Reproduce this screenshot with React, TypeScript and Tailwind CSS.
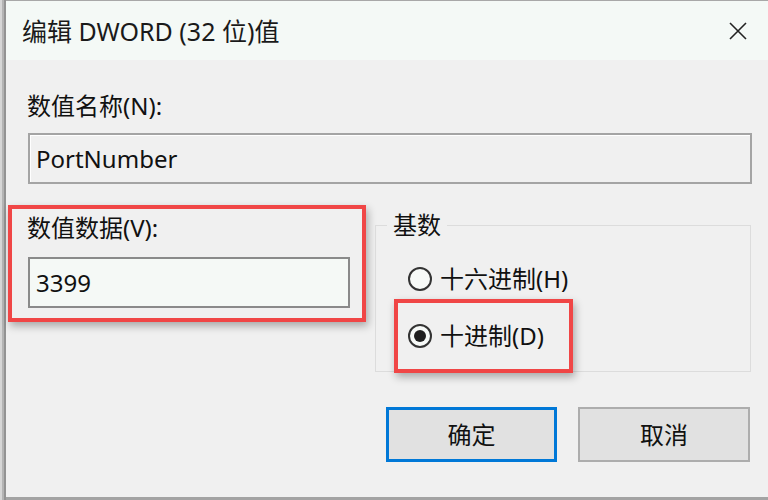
import React from 'react';

const font = { fontFamily: '"Noto Sans", "Noto Sans CJK SC", sans-serif' };

const Radio = ({ checked }: { checked?: boolean }) => (
  <span className="flex h-[24px] w-[24px] shrink-0 items-center justify-center rounded-full border-[2px] border-[#333333] bg-[#f7faf8]">
    {checked && <span className="h-[12px] w-[12px] rounded-full bg-[#1f1f1f]" />}
  </span>
);

const App = () => {
  return (
    <div className="flex h-[500px] w-[768px] overflow-hidden bg-[#f0f0f0] text-[#111111]" style={font}>
      {/* window frame, left side */}
      <div className="flex h-full">
        <div className="w-[2px] bg-[#d6d6d6]" />
        <div className="w-[2px] bg-[#b4b4b4]" />
        <div className="w-[2px] bg-[#939393]" />
      </div>

      <div className="flex flex-1 flex-col border-t border-b-[3px] border-t-[#a8a8a8] border-b-[#a3a3a3]">
        {/* Title bar */}
        <div className="flex h-[59px] shrink-0 items-center justify-between bg-[#f4f9f6] pl-[16px] pr-[21px]">
          <span className="text-[25px] leading-[30px] text-[#1a1a1a]">编辑 DWORD (32 位)值</span>
          <svg width="18" height="18" viewBox="0 0 18 18" className="text-[#222222]">
            <path d="M1 1 L17 17 M17 1 L1 17" stroke="currentColor" strokeWidth="1.6" />
          </svg>
        </div>

        {/* Body */}
        <div className="flex flex-1 flex-col">
          <div className="ml-[21px] mt-[32px] text-[24px] leading-[28px]">数值名称(N):</div>
          <div className="ml-[22px] mr-[16px] mt-[13px] flex h-[51px] items-center border-[2px] border-[#a4a4a4] bg-[#f0f0f0] pl-[6px] text-[24px] shadow-[inset_1px_1px_0_#ffffff]">
            PortNumber
          </div>

          <div className="mt-[21px] flex items-start">
            {/* Value data (highlighted) */}
            <div className="ml-[2px] h-[117px] w-[358px] border-[4px] border-[#f04646] pl-[15px] pt-[5px] shadow-[2px_4px_8px_rgba(0,0,0,0.3)]">
              <div className="text-[24px] leading-[28px]">数值数据(V):</div>
              <div className="ml-[1px] mt-[15px] flex h-[51px] w-[322px] items-center border-[2px] border-[#8a8a8a] bg-[#f5f9f6] pl-[6px] text-[24px]">
                3399
              </div>
            </div>

            {/* Base group */}
            <fieldset className="ml-[9px] mt-[6px] h-[161px] w-[376px] border border-[#dcdcdc] px-0 pb-0 pt-0">
              <legend className="ml-[11px] px-[6px] text-[24px] leading-[28px]">基数</legend>
              <div className="mt-[26px] flex items-center gap-[8px] pl-[32px] text-[24px] leading-[28px]">
                <Radio />
                <span>十六进制(H)</span>
              </div>
              <div className="ml-[18px] mt-[6px] flex h-[74px] w-[179px] items-center gap-[8px] border-[4px] border-[#f04646] pl-[10px] text-[24px] leading-[28px] shadow-[2px_4px_8px_rgba(0,0,0,0.3)]">
                <Radio checked />
                <span>十进制(D)</span>
              </div>
            </fieldset>
          </div>

          <div className="mr-[18px] mt-[35px] flex justify-end gap-[21px]">
            <button className="flex h-[55px] w-[171px] items-center justify-center border-[3px] border-[#0078d7] bg-[#e1e1e1] text-[24px]">
              确定
            </button>
            <button className="flex h-[55px] w-[172px] items-center justify-center border-[2px] border-[#adadad] bg-[#e1e1e1] text-[24px]">
              取消
            </button>
          </div>
        </div>
      </div>
    </div>
  );
};

export default App;
